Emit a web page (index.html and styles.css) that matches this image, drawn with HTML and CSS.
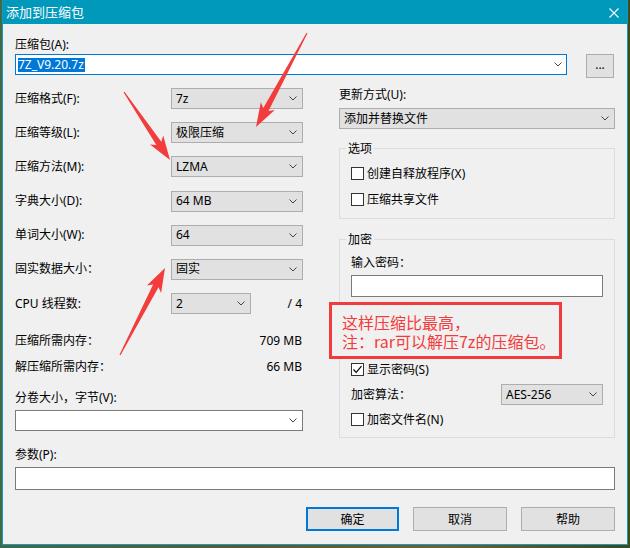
FILE: index.html
```html
<!DOCTYPE html>
<html lang="zh">
<head>
<meta charset="utf-8">
<title>添加到压缩包</title>
<link rel="stylesheet" href="styles.css">
</head>
<body>
<div class="window">
  <div class="titlebar">
    <span class="title">添加到压缩包</span>
    <svg class="close" width="10" height="10" viewBox="0 0 10 10"><path d="M0.5 0.5 L9.5 9.5 M9.5 0.5 L0.5 9.5" stroke="#fff" stroke-width="1.1" fill="none"/></svg>
  </div>
  <div class="client">
    <div class="lbl">压缩包(A):</div>
    <div class="archive-row">
      <div class="combo edit focus archive"><span class="sel">7Z_V9.20.7z</span><svg class="chev" width="8" height="5" viewBox="0 0 8 5"><polyline points="0.5,0.5 4,4 7.5,0.5" fill="none" stroke="#444" stroke-width="1"/></svg></div>
      <div class="btn browse">...</div>
    </div>
    <div class="cols">
      <div class="left">
        <div class="form">
          <div class="flabel">压缩格式(F):</div>
          <div class="combo"><span>7z</span><svg class="chev" width="8" height="5" viewBox="0 0 8 5"><polyline points="0.5,0.5 4,4 7.5,0.5" fill="none" stroke="#444" stroke-width="1"/></svg></div>
          <div class="flabel">压缩等级(L):</div>
          <div class="combo"><span>极限压缩</span><svg class="chev" width="8" height="5" viewBox="0 0 8 5"><polyline points="0.5,0.5 4,4 7.5,0.5" fill="none" stroke="#444" stroke-width="1"/></svg></div>
          <div class="flabel">压缩方法(M):</div>
          <div class="combo"><span>LZMA</span><svg class="chev" width="8" height="5" viewBox="0 0 8 5"><polyline points="0.5,0.5 4,4 7.5,0.5" fill="none" stroke="#444" stroke-width="1"/></svg></div>
          <div class="flabel">字典大小(D):</div>
          <div class="combo"><span>64 MB</span><svg class="chev" width="8" height="5" viewBox="0 0 8 5"><polyline points="0.5,0.5 4,4 7.5,0.5" fill="none" stroke="#444" stroke-width="1"/></svg></div>
          <div class="flabel">单词大小(W):</div>
          <div class="combo"><span>64</span><svg class="chev" width="8" height="5" viewBox="0 0 8 5"><polyline points="0.5,0.5 4,4 7.5,0.5" fill="none" stroke="#444" stroke-width="1"/></svg></div>
          <div class="flabel">固实数据大小：</div>
          <div class="combo"><span>固实</span><svg class="chev" width="8" height="5" viewBox="0 0 8 5"><polyline points="0.5,0.5 4,4 7.5,0.5" fill="none" stroke="#444" stroke-width="1"/></svg></div>
          <div class="flabel">CPU 线程数:</div>
          <div class="cpu">
            <div class="combo small"><span>2</span><svg class="chev" width="8" height="5" viewBox="0 0 8 5"><polyline points="0.5,0.5 4,4 7.5,0.5" fill="none" stroke="#444" stroke-width="1"/></svg></div>
            <span class="of">/ 4</span>
          </div>
        </div>
        <div class="mem first"><span>压缩所需内存：</span><span>709 MB</span></div>
        <div class="mem second"><span>解压缩所需内存：</span><span>66 MB</span></div>
        <div class="lbl vol-lbl">分卷大小，字节(V):</div>
        <div class="combo edit vol"><span></span><svg class="chev" width="8" height="5" viewBox="0 0 8 5"><polyline points="0.5,0.5 4,4 7.5,0.5" fill="none" stroke="#444" stroke-width="1"/></svg></div>
      </div>
      <div class="right">
        <div class="lbl">更新方式(U):</div>
        <div class="combo update"><span>添加并替换文件</span><svg class="chev" width="8" height="5" viewBox="0 0 8 5"><polyline points="0.5,0.5 4,4 7.5,0.5" fill="none" stroke="#444" stroke-width="1"/></svg></div>
        <fieldset class="group options">
          <legend>选项</legend>
          <div class="check"><span class="box"></span><span>创建自释放程序(X)</span></div>
          <div class="check second"><span class="box"></span><span>压缩共享文件</span></div>
        </fieldset>
        <fieldset class="group encrypt">
          <legend>加密</legend>
          <div class="lbl">输入密码：</div>
          <div class="textbox pwd"></div>
          <div class="check show"><span class="box"><svg width="11" height="11" viewBox="0 0 11 11"><polyline points="1.5,5.5 4.2,8.3 9.5,2.2" fill="none" stroke="#000" stroke-width="1.2"/></svg></span><span>显示密码(S)</span></div>
          <div class="algo"><span>加密算法：</span>
            <div class="combo algo-sel"><span>AES-256</span><svg class="chev" width="8" height="5" viewBox="0 0 8 5"><polyline points="0.5,0.5 4,4 7.5,0.5" fill="none" stroke="#444" stroke-width="1"/></svg></div>
          </div>
          <div class="check names"><span class="box"></span><span>加密文件名(N)</span></div>
        </fieldset>
      </div>
    </div>
    <div class="lbl params-lbl">参数(P):</div>
    <div class="textbox params"></div>
    <div class="buttons">
      <div class="btn ok">确定</div>
      <div class="btn cancel">取消</div>
      <div class="btn help">帮助</div>
    </div>
  </div>
</div>

<svg class="arrows" width="630" height="548" viewBox="0 0 630 548">
  <polygon fill="#f33d3d" points="307.5,33.3 268.5,111.1 274.8,110.0 256,127 260.8,102.2 263.3,108.1 306.5,32.7"/>
  <polygon fill="#f33d3d" points="124.5,91.7 161.3,141.7 163.2,135.6 170,160 150.0,144.6 156.3,145.1 123.5,92.3"/>
  <polygon fill="#f33d3d" points="120.5,355.2 158.5,287.2 161.1,293.0 165,268 146.9,285.6 153.1,284.4 119.5,354.8"/>
</svg>

<div class="note">
  <div class="note-line">这样压缩比最高，</div>
  <div class="note-line">注：rar可以解压7z的压缩包。</div>
</div>
</body>
</html>
```

FILE: styles.css
```css
* { box-sizing: border-box; }
html, body { margin: 0; padding: 0; }
body {
  width: 630px;
  height: 548px;
  overflow: hidden;
  position: relative;
  background: linear-gradient(90deg, #3f6a4a 0%, #5a5a2e 40%, #6a6234 70%, #3c4a1e 100%);
  font-family: "Noto Sans", "Noto Sans CJK SC", sans-serif;
  font-size: 12px;
  line-height: 16px;
  color: #000;
}
.window {
  margin-left: 2px;
  width: 626px;
  height: 545px;
  background: #f0f0f0;
  border: 1px solid #1d97bf;
  border-top: 0;
}
.titlebar {
  height: 24px;
  background: #0099bc;
  color: #fff;
  display: flex;
  align-items: center;
  justify-content: space-between;
  padding-left: 3px;
  padding-right: 8px;
}
.title {
  font-family: "Noto Sans CJK SC", sans-serif;
  font-size: 13px;
  line-height: 16px;
}
.close { display: block; margin-top: 1px; }
.client {
  padding: 13px 11px 0 12px;
}
.lbl { line-height: 16px; white-space: nowrap; }
.archive-row {
  display: flex;
  gap: 19px;
  margin-top: 1px;
  align-items: flex-start;
}
.combo {
  position: relative;
  height: 21px;
  background: #e1e1e1;
  border: 1px solid #adadad;
  display: flex;
  align-items: center;
  padding-left: 4px;
  white-space: nowrap;
}
.combo .chev {
  position: absolute;
  right: 5px;
  top: 7px;
}
.combo.edit { background: #fff; border-color: #7a7a7a; padding-left: 2px; }
.combo.focus { border-color: #0078d7; }
.combo.archive { width: 552px; }
.combo.archive .chev { right: 4px; }
.sel {
  display: inline-block;
  background: #0078d7;
  color: #fff;
  line-height: 14px;
  height: 14px;
  padding: 0 1px 0 0;
}
.btn {
  background: #e1e1e1;
  border: 1px solid #adadad;
  display: flex;
  align-items: center;
  justify-content: center;
  font-family: "Noto Sans CJK SC", sans-serif;
  height: 24px;
}
.browse { width: 28px; padding-bottom: 2px; font-family: "Noto Sans", sans-serif; }
.cols {
  display: grid;
  grid-template-columns: 288px 276px;
  column-gap: 36px;
  margin-top: 9px;
  align-items: start;
}
.form {
  display: grid;
  grid-template-columns: 156px 132px;
  grid-auto-rows: 21px;
  row-gap: 13.2px;
  margin-top: 1px;
  align-items: center;
}
.flabel { white-space: nowrap; }
.cpu { display: flex; align-items: center; justify-content: space-between; }
.combo.small { width: 80px; }
.of { padding-right: 1px; }
.mem { display: flex; justify-content: space-between; padding-right: 1px; }
.mem.first { margin-top: 19px; }
.mem.second { margin-top: 10px; }
.vol-lbl { margin-top: 15px; }
.combo.vol { margin-top: 4px; width: 288px; }
.combo.update { margin-top: 5px; width: 276px; }
.group {
  margin: 0;
  min-width: 0;
  border: 1px solid #dcdcdc;
  padding: 11px 11px 12px 11px;
}
.group legend {
  padding: 0 2px;
  margin-left: -5px;
  line-height: 16px;
  font-family: "Noto Sans CJK SC", sans-serif;
}
.options { margin-top: 11px; }
.encrypt { margin-top: 12px; padding-top: 8px; padding-bottom: 11px; }
.check {
  display: flex;
  align-items: center;
  height: 13px;
  gap: 3px;
  white-space: nowrap;
}
.check.second { margin-top: 13px; }
.box {
  width: 13px;
  height: 13px;
  border: 1px solid #333;
  background: #fff;
  display: flex;
  align-items: center;
  justify-content: center;
  flex: none;
}
.box svg { display: block; }
.textbox { background: #fff; border: 1px solid #7a7a7a; }
.pwd { margin-top: 4px; width: 252px; height: 22px; }
.check.show { margin-top: 66px; }
.algo {
  display: flex;
  align-items: center;
  justify-content: space-between;
  margin-top: 8px;
  height: 21px;
}
.combo.algo-sel { width: 102px; }
.check.names { margin-top: 8px; }
.params-lbl { margin-top: 9px; }
.params { margin-top: 4px; width: 600px; height: 23px; }
.buttons {
  display: flex;
  justify-content: flex-end;
  gap: 14px;
  margin-top: 17px;
  margin-right: 1px;
}
.ok { width: 93px; border: 2px solid #0078d7; }
.cancel, .help { width: 94px; }
.arrows {
  position: absolute;
  left: 0;
  top: 0;
  pointer-events: none;
}
.note {
  position: absolute;
  left: 329px;
  top: 302px;
  width: 233px;
  height: 57px;
  border: 3px solid #f03c3c;
  background: #f0f0f0;
  color: #f33b3b;
  font-family: "Noto Sans CJK SC", sans-serif;
  font-size: 16px;
  line-height: 19px;
  padding: 8px 0 0 10px;
  white-space: nowrap;
}
.note-line { height: 19px; }
```
